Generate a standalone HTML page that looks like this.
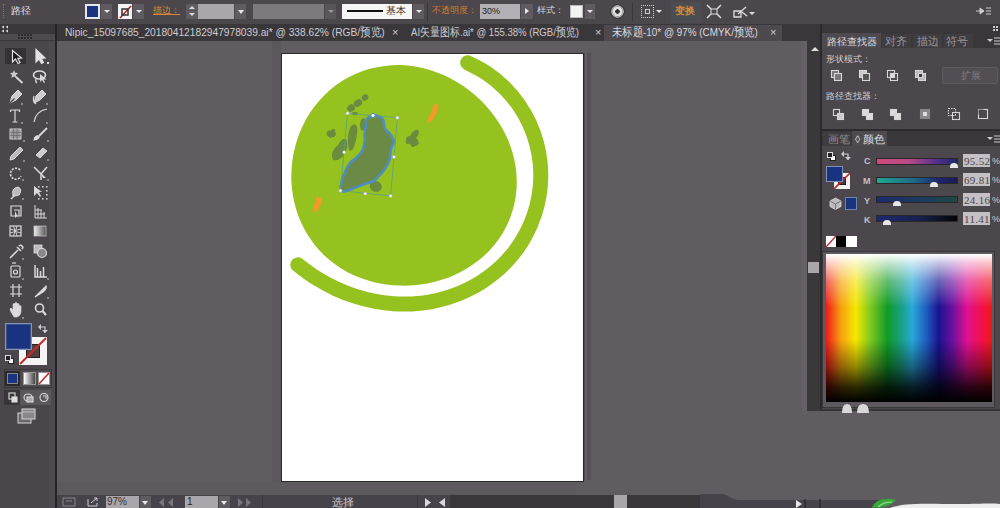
<!DOCTYPE html>
<html><head><meta charset="utf-8">
<style>
*{margin:0;padding:0;box-sizing:border-box}
html,body{width:1000px;height:508px;overflow:hidden;background:#615c62;font-family:"Liberation Sans",sans-serif;}
.a{position:absolute}
#top{left:0;top:0;width:1000px;height:24px;background:#4b474c}
#tabbar{left:57px;top:24px;width:765px;height:17px;background:#3a373b}
#tbhead{left:0;top:24px;width:57px;height:10px;background:#3a373b}
#toolbox{left:0;top:34px;width:55px;height:474px;background:#4a464b}
#tbborder{left:55px;top:24px;width:2px;height:484px;background:#262327}
#canvas{left:57px;top:41px;width:750px;height:453px;background:#615c62}
#status{left:57px;top:495px;width:665px;height:13px;background:#47434a}
.txt{color:#d8d4d9;font-size:11px;white-space:nowrap;line-height:1}
.otxt{color:#d9893a;font-size:11px;white-space:nowrap;line-height:1}
</style></head><body>
<div id="top" class="a"></div>
<div id="tbhead" class="a"></div>
<div id="toolbox" class="a"></div>
<div id="tbborder" class="a"></div>
<div class="a" style="left:49px;top:41px;width:6px;height:467px;background:#4e4a4f"></div>
<!-- TOOLBOX -->
<div class="a" style="left:0;top:34px;width:55px;height:7px;background:#4e4a4f;border-bottom:1px solid #3c393d"></div>
<div class="a" style="left:18px;top:34px;width:15px;height:2px;background:repeating-linear-gradient(90deg,#2e2b2f 0 2px,transparent 2px 3px)"></div>
<div class="a" style="left:18px;top:37px;width:15px;height:2px;background:repeating-linear-gradient(90deg,#2e2b2f 0 2px,transparent 2px 3px)"></div>
<div class="a" style="left:5px;top:48px;width:21px;height:16px;background:#353236"></div>
<svg class="a" style="left:0;top:40px" width="55" height="400" fill="none" stroke="#dcd8dd" stroke-width="1.2">
<g transform="translate(0,-40)">
 <!-- selection -->
 <path d="M12.5,50.5 L12.5,62 L15.5,59 L18,63.5 L20,62.5 L17.8,58.3 L21.5,58 Z" fill="#1a181b" stroke="#e4e0e5"/>
 <!-- direct selection -->
 <path d="M36,49.5 L36,62 L39,59 L41.5,63.5 L43.5,62.5 L41.2,58.3 L45,58 Z" fill="#e4e0e5" stroke="#e4e0e5"/>
 <path d="M47,62 l2,0 l0,2 l-2,0z" fill="#ddd" stroke="none"/>
 <!-- magic wand -->
 <path d="M14,70 l1.2,2.8 3,0.3 -2.3,2 0.8,3 -2.7,-1.6 -2.7,1.6 0.8,-3 -2.3,-2 3,-0.3z" fill="#cfcbd0" stroke="none"/>
 <path d="M16,77 L22.5,83" stroke-width="1.8"/>
 <!-- lasso -->
 <ellipse cx="39.5" cy="75" rx="6" ry="4" stroke-width="1.6"/>
 <path d="M40,74 l0,8 l2,-2 l2,3 l1,-0.5 l-1.5,-3 l3,0z" fill="#dcd8dd" stroke="none"/>
 <path d="M36,79 q-1,3 1,4" />
 <!-- pen -->
 <path d="M10,103 L12,96 L18,90 L22,94 L16,100 Z" fill="#cfcbd0" stroke="#dcd8dd" stroke-width="1"/>
 <path d="M10,103 L14.5,98.5" stroke="#4a464b"/>
 <circle cx="22" cy="104" r="0.8" fill="#ddd" stroke="none"/>
 <!-- curvature pen -->
 <path d="M34,103 L36,96 L42,90 L46,94 L40,100 Z" fill="#cfcbd0" stroke="#dcd8dd" stroke-width="1"/>
 <path d="M34,96 q-2,5 2,8" />
 <circle cx="47" cy="104" r="0.8" fill="#ddd" stroke="none"/>
 <!-- type -->
 <path d="M10.5,110 h9 v2 M15,110 v12 M12.5,122 h5 M10.5,110 v2"/>
 <circle cx="22" cy="123" r="0.8" fill="#ddd" stroke="none"/>
 <!-- arc -->
 <path d="M34,122 Q36,111 47,109"/>
 <circle cx="47" cy="123" r="0.8" fill="#ddd" stroke="none"/>
 <!-- rect/grid -->
 <rect x="10" y="129" width="11" height="10" fill="#9a969b" stroke="#cfcbd0" stroke-width="1"/>
 <path d="M10,132.5 h11 M10,135.5 h11 M13.5,129 v10 M17,129 v10" stroke="#6a666b" stroke-width="0.7"/>
 <circle cx="24" cy="141" r="0.8" fill="#ddd" stroke="none"/>
 <!-- paintbrush -->
 <path d="M47,128 L39,136" stroke-width="1.8"/>
 <path d="M34,140 q1,-5 5,-4 q1,3 -5,4z" fill="#dcd8dd"/>
 <circle cx="48" cy="141" r="0.8" fill="#ddd" stroke="none"/>
 <!-- pencil -->
 <path d="M10,160 L11,156 L20,147 L23,150 L14,159 Z" fill="#bdb9be" stroke="#dcd8dd" stroke-width="1"/>
 <circle cx="24" cy="161" r="0.8" fill="#ddd" stroke="none"/>
 <!-- eraser -->
 <path d="M36,155 L43,148 L47,151 L40,158 Z" fill="#cfcbd0" stroke="#dcd8dd" stroke-width="1"/>
 <circle cx="48" cy="160" r="0.8" fill="#ddd" stroke="none"/>
 <!-- rotate -->
 <path d="M20,170 A5.5,5.5 0 1 0 21,176" stroke-dasharray="2 1.3" stroke-width="1.6"/>
 <circle cx="23" cy="180" r="0.8" fill="#ddd" stroke="none"/>
 <!-- reflect/scissors -->
 <path d="M34,167 L41,174 M47,167 L41,174 L41,180" stroke-width="1.5"/>
 <path d="M40,172 l6,6 l-3,0 z" fill="#dcd8dd" stroke="none"/>
 <circle cx="48" cy="180" r="0.8" fill="#ddd" stroke="none"/>
 <!-- warp -->
 <path d="M13,196 q-2,-8 5,-9 q5,2 1,8 q-3,1 -6,1z" fill="#bdb9be" stroke="#dcd8dd" stroke-width="1"/>
 <path d="M11,199 l4,-4" stroke-width="1.5"/>
 <circle cx="23" cy="199" r="0.8" fill="#ddd" stroke="none"/>
 <!-- free transform dots -->
 <path d="M34,186 L34,196 L37,193 L40,197 L41,196 L39,192 L42,192 Z" fill="#dcd8dd" stroke="none"/>
 <g fill="#cfcbd0" stroke="none"><rect x="38" y="186" width="1.6" height="1.6"/><rect x="42" y="186" width="1.6" height="1.6"/><rect x="46" y="186" width="1.6" height="1.6"/><rect x="46" y="190" width="1.6" height="1.6"/><rect x="46" y="194" width="1.6" height="1.6"/><rect x="38" y="198" width="1.6" height="1.6"/><rect x="42" y="198" width="1.6" height="1.6"/><rect x="46" y="198" width="1.6" height="1.6"/></g>
 <!-- shape builder -->
 <path d="M11,206 h10 v10 h-10z M14,210 h5 v6"/>
 <path d="M15,211 l0,7 l2,-2 l2,3z" fill="#ddd" stroke="none"/>
 <!-- perspective -->
 <path d="M35,205 v13 h12 M38,208 v10 M41,210 v8 M44,212 v6 M35,210 h7 M35,214 h10" stroke-width="1"/>
 <!-- mesh -->
 <rect x="10" y="226" width="11" height="10" stroke-width="1.2"/>
 <path d="M10,229 q5,3 11,0 M10,233 q5,-3 11,0 M13.5,226 q3,5 0,10 M17,226 q-3,5 0,10" stroke-width="0.9"/>
 <!-- gradient -->
 <defs><linearGradient id="gg"><stop offset="0" stop-color="#f0f0f0"/><stop offset="1" stop-color="#555"/></linearGradient></defs>
 <rect x="34" y="226" width="12" height="10" fill="url(#gg)" stroke="#bbb" stroke-width="0.8"/>
 <!-- eyedropper -->
 <path d="M10,258 L18,250 M17,247 l4,4 M19,246 a2,2 0 0 1 3,3" stroke-width="1.6"/>
 <circle cx="23" cy="259" r="0.8" fill="#ddd" stroke="none"/>
 <!-- blend -->
 <rect x="34" y="245" width="8" height="8" fill="#bdb9be" stroke="#ddd" stroke-width="0.8"/>
 <circle cx="42" cy="253" r="4.5" fill="#8a868b" stroke="#ddd" stroke-width="1.2"/>
 <!-- symbol sprayer -->
 <rect x="11" y="266" width="9" height="11" rx="1"/>
 <circle cx="15.5" cy="272" r="2"/>
 <path d="M12,263 h4" />
 <circle cx="23" cy="279" r="0.8" fill="#ddd" stroke="none"/>
 <!-- column graph -->
 <path d="M35,265 v12 h12 M37.5,268 v9 M40.5,271 v6 M43.5,267 v10" stroke-width="1.5"/>
 <circle cx="48" cy="279" r="0.8" fill="#ddd" stroke="none"/>
 <!-- artboard -->
 <path d="M13,284 v13 M19,284 v13 M10,287 h12 M10,294 h12" stroke-width="1.2"/>
 <!-- slice -->
 <path d="M35,297 L46,286 q1,3 -3,6 z" fill="#dcd8dd"/>
 <circle cx="48" cy="298" r="0.8" fill="#ddd" stroke="none"/>
 <!-- hand -->
 <path d="M11,312 q-2,-4 0,-4 l2,2 v-6 q1,-1 2,0 v5 v-6 q1,-1 2,0 v6 v-5 q1,-1 2,0 v5 v-3 q1,-1 2,0 v5 q0,5 -4,6 h-3 z" fill="#dcd8dd" stroke="#dcd8dd" stroke-width="0.6"/>
 <circle cx="23" cy="318" r="0.8" fill="#ddd" stroke="none"/>
 <!-- zoom -->
 <circle cx="39.5" cy="308" r="4" stroke-width="1.6"/>
 <path d="M42.5,311 L46,315" stroke-width="2.2"/>
 <!-- color swatches -->
</g></svg>
<div class="a" style="left:19px;top:337px;width:28px;height:28px;background:#f4f4f4"></div>
<div class="a" style="left:26px;top:344px;width:14px;height:14px;background:#55403f;border:1px solid #222"></div>
<svg class="a" style="left:19px;top:337px" width="28" height="28"><line x1="1" y1="27" x2="27" y2="1" stroke="#c42a2a" stroke-width="2"/></svg>
<div class="a" style="left:5px;top:323px;width:27px;height:27px;background:#8394b8;padding:1px"><div style="width:25px;height:25px;background:#1a3380;border:1px solid #3a4f8a"></div></div>
<svg class="a" style="left:38px;top:324px" width="10" height="10"><path d="M1,3 h6 v6" fill="none" stroke="#ccc" stroke-width="1.2"/><path d="M0,3 l3,-3 v6z M4,6 h6 l-3,3z" fill="#ccc"/></svg>
<div class="a" style="left:8px;top:358px;width:6px;height:6px;background:#fff;border:1px solid #222"></div>
<div class="a" style="left:5px;top:355px;width:6px;height:6px;background:#222;border:1px solid #ddd"></div>
<div class="a" style="left:4px;top:369px;width:48px;height:19px;background:#4f4b50;border:1px solid #3a373b"></div>
<div class="a" style="left:4px;top:390px;width:47px;height:15px;background:#5a565b"></div>
<div class="a" style="left:5px;top:371px;width:15px;height:15px;background:#2a272b;padding:2px"><div style="width:11px;height:11px;background:#1a3380;border:1px solid #888"></div></div>
<div class="a" style="left:23px;top:372px;width:13px;height:13px;background:linear-gradient(90deg,#fff,#444);border:1px solid #999"></div>
<div class="a" style="left:38px;top:372px;width:12px;height:13px;background:#fff;border:1px solid #999"></div>
<svg class="a" style="left:38px;top:372px" width="12" height="13"><line x1="1" y1="12" x2="11" y2="1" stroke="#c42a2a" stroke-width="1.6"/></svg>
<div class="a" style="left:4px;top:390px;width:16px;height:15px;background:#39363a"></div>
<svg class="a" style="left:5px;top:390px" width="46" height="15" fill="none" stroke="#ddd" stroke-width="1.1">
 <rect x="4" y="3" width="6" height="6"/><rect x="7" y="7" width="5" height="5" fill="#ddd"/>
 <ellipse cx="23" cy="7.5" rx="4" ry="3.5"/><rect x="22" y="7" width="6" height="5" fill="#aaa"/>
 <circle cx="39" cy="7.5" r="4"/><path d="M38,6 h3 v3"/>
</svg>
<svg class="a" style="left:17px;top:408px" width="20" height="18" fill="none" stroke="#ccc" stroke-width="1.1">
 <rect x="1" y="5" width="13" height="10" fill="#6a666b"/><rect x="5" y="1" width="13" height="10" fill="#8a868b"/><path d="M5,4 h13" stroke="#bbb"/>
</svg>

<div id="tabbar" class="a"></div>
<!-- TOP CONTROL BAR -->
<div class="a" style="left:3px;top:4px;width:2px;height:14px;border-left:1px dotted #7a767b"></div>
<div class="a txt" style="left:11px;top:6px;font-size:10px;color:#e0dce1">路径</div>
<div class="a" style="left:85px;top:4px;width:15px;height:15px;background:#e6e6f0;padding:2px"><div style="width:11px;height:11px;background:#1b3480"></div></div>
<div class="a" style="left:101px;top:4px;width:11px;height:15px;background:#5f5b60"></div>
<div class="a" style="left:104px;top:10px;width:0;height:0;border-left:3px solid transparent;border-right:3px solid transparent;border-top:3px solid #e8e8e8"></div>
<div class="a" style="left:118px;top:4px;width:14px;height:15px;background:#f4f4f4"></div>
<svg class="a" style="left:118px;top:4px" width="14" height="15"><line x1="2" y1="14" x2="13" y2="2" stroke="#b02020" stroke-width="1.5"/><rect x="4" y="5" width="6" height="6" fill="none" stroke="#333" stroke-width="1.5"/></svg>
<div class="a" style="left:133px;top:4px;width:11px;height:15px;background:#5f5b60"></div>
<div class="a" style="left:136px;top:10px;width:0;height:0;border-left:3px solid transparent;border-right:3px solid transparent;border-top:3px solid #e8e8e8"></div>
<div class="a otxt" style="left:153px;top:6px;font-size:9px;text-decoration:underline">描边：</div>
<div class="a" style="left:186px;top:4px;width:12px;height:15px;background:#5f5b60"></div>
<div class="a" style="left:189px;top:6px;width:0;height:0;border-left:3px solid transparent;border-right:3px solid transparent;border-bottom:3px solid #ddd"></div>
<div class="a" style="left:189px;top:13px;width:0;height:0;border-left:3px solid transparent;border-right:3px solid transparent;border-top:3px solid #ddd"></div>
<div class="a" style="left:198px;top:4px;width:36px;height:15px;background:#aaa6ab"></div>
<div class="a" style="left:235px;top:4px;width:11px;height:15px;background:#5f5b60"></div>
<div class="a" style="left:238px;top:10px;width:0;height:0;border-left:3px solid transparent;border-right:3px solid transparent;border-top:4px solid #e8e8e8"></div>
<div class="a" style="left:253px;top:4px;width:71px;height:15px;background:#7d797e"></div>
<div class="a" style="left:325px;top:4px;width:11px;height:15px;background:#59555a"></div>
<div class="a" style="left:328px;top:10px;width:0;height:0;border-left:3px solid transparent;border-right:3px solid transparent;border-top:3px solid #999"></div>
<div class="a" style="left:342px;top:4px;width:70px;height:15px;background:#f6f6f6"></div>
<div class="a" style="left:347px;top:10px;width:36px;height:2px;background:#111"></div>
<div class="a txt" style="left:386px;top:6px;color:#333;font-size:10px">基本</div>
<div class="a" style="left:413px;top:4px;width:11px;height:15px;background:#5f5b60"></div>
<div class="a" style="left:416px;top:10px;width:0;height:0;border-left:3px solid transparent;border-right:3px solid transparent;border-top:3px solid #e8e8e8"></div>
<div class="a" style="left:427px;top:3px;width:1px;height:18px;background:#3a373b"></div>
<div class="a otxt" style="left:432px;top:6px;font-size:9px;color:#d27a30">不透明度：</div>
<div class="a" style="left:480px;top:4px;width:40px;height:15px;background:#b3afb4"></div>
<div class="a txt" style="left:482px;top:7px;color:#222;font-size:9px">30%</div>
<div class="a" style="left:521px;top:4px;width:12px;height:15px;background:#5f5b60"></div>
<div class="a" style="left:525px;top:8px;width:0;height:0;border-top:3px solid transparent;border-bottom:3px solid transparent;border-left:4px solid #e8e8e8"></div>
<div class="a txt" style="left:537px;top:6px;font-size:9px">样式：</div>
<div class="a" style="left:570px;top:5px;width:13px;height:13px;background:#f2f2f2;border:1px solid #bbb"></div>
<div class="a" style="left:585px;top:4px;width:10px;height:15px;background:#5f5b60"></div>
<div class="a" style="left:587px;top:10px;width:0;height:0;border-left:3px solid transparent;border-right:3px solid transparent;border-top:3px solid #e8e8e8"></div>
<div class="a" style="left:610px;top:4px;width:15px;height:15px;border-radius:50%;background:radial-gradient(circle at 50% 50%,#333 0 2px,#e0e0e0 2.5px 4.5px,#a8a8a8 5px 6px,#3a3a3a 6.5px)"></div>
<div class="a" style="left:632px;top:3px;width:1px;height:18px;background:#3a373b"></div>
<div class="a" style="left:641px;top:5px;width:13px;height:13px;border:1px dotted #ccc"></div>
<div class="a" style="left:645px;top:9px;width:5px;height:5px;border:1px solid #ccc"></div>
<div class="a" style="left:656px;top:10px;width:0;height:0;border-left:3px solid transparent;border-right:3px solid transparent;border-top:3px solid #e8e8e8"></div>
<div class="a" style="left:671px;top:2px;width:30px;height:21px;background:#4b4d53"></div>
<div class="a otxt" style="left:675px;top:6px;font-size:10px;font-weight:bold">变换</div>
<svg class="a" style="left:706px;top:4px" width="16" height="15"><path d="M1,1 L5,5 M15,1 L11,5 M1,14 L5,10 M15,14 L11,10" stroke="#ddd" stroke-width="1.5"/><rect x="5" y="5" width="6" height="5" fill="none" stroke="#ddd"/></svg>
<svg class="a" style="left:732px;top:4px" width="24" height="15"><path d="M2,7 h7 v6 h-7 z M6,10 L14,3 M10,8 L15,12" stroke="#ddd" stroke-width="1.3" fill="none"/><path d="M17,8 l3,3 l3,-3 z" fill="#ddd"/></svg>
<svg class="a" style="left:976px;top:7px" width="16" height="9"><path d="M0,4 h8 M4,1 l4,3 l-4,3 z" stroke="#ccc" fill="#ccc"/><path d="M10,1 h5 M10,4 h5 M10,7 h5" stroke="#ccc"/></svg>

<div id="canvas" class="a"></div>
<div class="a" style="left:272px;top:41px;width:9px;height:441px;background:#5c575d"></div>
<div class="a" style="left:583px;top:53px;width:9px;height:427px;background:linear-gradient(90deg,#4a464b 0,#4f4b50 2px,#646064 2px,#646064 4px,#545055 4px,#575358 8px,#5d595e 8px)"></div>
<!-- TABS -->
<div class="a" style="left:604px;top:25px;width:178px;height:16px;background:#4d494e"></div>
<div class="a txt" style="left:65px;top:27px;font-size:11.5px;color:#cfcbd0;transform:scaleX(0.887);transform-origin:0 0">Nipic_15097685_20180412182947978039.ai* @ 338.62% (RGB/预览)</div>
<div class="a txt" style="left:392px;top:27px;font-size:11px;color:#cfcbd0">×</div>
<div class="a txt" style="left:411px;top:27px;font-size:11.5px;color:#cfcbd0;transform:scaleX(0.832);transform-origin:0 0">AI矢量图标.ai* @ 155.38% (RGB/预览)</div>
<div class="a txt" style="left:595px;top:27px;font-size:11px;color:#cfcbd0">×</div>
<div class="a txt" style="left:612px;top:27px;font-size:11.5px;color:#dcd8dd;transform:scaleX(0.861);transform-origin:0 0">未标题-10* @ 97% (CMYK/预览)</div>
<div class="a txt" style="left:770px;top:27px;font-size:11px;color:#cfcbd0">×</div>
<svg class="a" style="left:1px;top:25px" width="8" height="8" fill="#d8d8d8"><path d="M3,0.5 l-2.5,1.5 l2.5,1.5z M7,0.5 l-2.5,1.5 l2.5,1.5z M3,4.5 l-2.5,1.5 l2.5,1.5z M7,4.5 l-2.5,1.5 l2.5,1.5z"/></svg>

<div id="status" class="a"></div>
<!-- STATUS BAR -->
<div class="a" style="left:57px;top:482px;width:519px;height:13px;background:#5d595e"></div>
<div class="a" style="left:450px;top:495px;width:272px;height:13px;background:#3b383c"></div>
<div class="a" style="left:614px;top:495px;width:13px;height:13px;background:#a9a5aa"></div>
<svg class="a" style="left:700px;top:480px" width="300" height="28"><path d="M0,14 L22,14 C28,14 30,20 40,20 L180,20 L180,28 L0,28 Z" fill="#47434a"/><path d="M172,28 C174,20 186,17 196,20 C192,25 182,28 172,28Z" fill="#38a838"/><path d="M178,27 C182,23 188,22 192,22" stroke="#9ee09e" stroke-width="1.2" fill="none"/><path d="M190,28 C205,22 230,24 260,24 C280,24 290,23 300,24 L300,28 Z" fill="#eeeeee"/></svg>
<svg class="a" style="left:60px;top:496px" width="200" height="12" fill="none" stroke="#8a868b" stroke-width="1">
 <path d="M3,2 h12 v8 h-12z M6,5 h6" />
 <path d="M28,3 v7 h9 v-3 M31,7 l6,-5 M34,2 h3 v3" stroke="#cfcbd0"/>
</svg>
<div class="a" style="left:106px;top:496px;width:33px;height:12px;background:#aaa6ab"></div>
<div class="a txt" style="left:107px;top:497px;font-size:10px;color:#333">97%</div>
<div class="a" style="left:140px;top:496px;width:11px;height:12px;background:#5f5b60"></div>
<div class="a" style="left:142px;top:501px;width:0;height:0;border-left:3px solid transparent;border-right:3px solid transparent;border-top:4px solid #e8e8e8"></div>
<svg class="a" style="left:155px;top:497px" width="25" height="11" fill="#7a767b"><path d="M2,1 v9 M9,1 l-5,4.5 l5,4.5z M18,1 l-5,4.5 l5,4.5z"/></svg>
<div class="a" style="left:185px;top:496px;width:33px;height:12px;background:#aaa6ab"></div>
<div class="a txt" style="left:187px;top:497px;font-size:10px;color:#222">1</div>
<div class="a" style="left:219px;top:496px;width:11px;height:12px;background:#5f5b60"></div>
<div class="a" style="left:221px;top:501px;width:0;height:0;border-left:3px solid transparent;border-right:3px solid transparent;border-top:4px solid #e8e8e8"></div>
<svg class="a" style="left:234px;top:497px" width="25" height="11" fill="#7a767b"><path d="M4,1 l5,4.5 l-5,4.5z M12,1 l5,4.5 l-5,4.5z M19,1 v9"/></svg>
<div class="a" style="left:262px;top:495px;width:1px;height:13px;background:#3a373b"></div>
<div class="a txt" style="left:332px;top:497px;font-size:10.5px;color:#d0ccd1">选择</div>
<div class="a" style="left:417px;top:495px;width:1px;height:13px;background:#3a373b"></div>
<svg class="a" style="left:423px;top:497px" width="26" height="11" fill="#dcd8dd"><path d="M2,1 l6,4.5 l-6,4.5z M22,1 l-6,4.5 l6,4.5z"/></svg>
<svg class="a" style="left:795px;top:499px" width="30" height="9" fill="#e8e8e8"><path d="M1,1 l6,4 l-6,4z"/><path d="M10,0 v9 M25,0 v9" stroke="#2e2b2f" stroke-width="1.5"/></svg>

<!-- artboard -->
<div class="a" style="left:281px;top:53px;width:303px;height:429px;background:#fff;border:1px solid #2c292d"></div>
<svg class="a" style="left:0;top:0" width="1000" height="508">
  <path id="blob" d="M516.8,181.5 C516.8,186.6 516.5,191.7 515.7,196.7 C515.0,201.8 513.8,206.8 512.3,211.6 C510.8,216.4 508.9,221.2 506.7,225.7 C504.5,230.2 501.9,234.6 499.1,238.7 C496.2,242.8 493.0,246.7 489.7,250.3 C486.3,253.9 482.6,257.2 478.8,260.3 C475.0,263.3 470.9,266.1 466.8,268.6 C462.7,271.1 458.4,273.3 454.1,275.2 C449.8,277.1 445.3,278.7 440.8,280.1 C436.4,281.5 431.9,282.6 427.3,283.5 C422.8,284.3 418.2,284.9 413.7,285.3 C409.1,285.7 404.5,285.8 400.0,285.6 C395.5,285.5 390.9,285.2 386.4,284.5 C381.9,283.9 377.5,283.1 373.1,282.0 C368.7,280.8 364.3,279.5 360.1,277.8 C355.9,276.2 351.7,274.3 347.6,272.2 C343.6,270.0 339.7,267.6 336.0,265.0 C332.2,262.3 328.6,259.4 325.2,256.3 C321.9,253.1 318.7,249.7 315.7,246.2 C312.8,242.6 310.1,238.8 307.6,234.8 C305.2,230.9 303.0,226.7 301.1,222.5 C299.2,218.2 297.5,213.8 296.1,209.3 C294.8,204.8 293.7,200.2 292.9,195.6 C292.1,191.0 291.6,186.2 291.4,181.5 C291.2,176.8 291.3,172.0 291.7,167.2 C292.0,162.5 292.7,157.7 293.7,153.0 C294.6,148.3 295.9,143.6 297.4,139.0 C298.9,134.4 300.8,129.8 302.9,125.4 C305.0,121.0 307.5,116.7 310.2,112.6 C312.9,108.5 315.9,104.5 319.2,100.7 C322.5,97.0 326.1,93.4 329.9,90.1 C333.7,86.9 337.8,83.8 342.0,81.1 C346.3,78.4 350.8,76.0 355.5,74.0 C360.1,71.9 364.9,70.2 369.8,68.8 C374.7,67.5 379.7,66.5 384.8,65.9 C389.8,65.3 394.9,65.0 400.0,65.1 C405.1,65.2 410.2,65.7 415.1,66.5 C420.1,67.3 425.1,68.5 429.9,70.0 C434.7,71.4 439.4,73.2 444.0,75.3 C448.6,77.3 453.0,79.6 457.3,82.2 C461.6,84.8 465.7,87.6 469.7,90.7 C473.6,93.7 477.4,97.1 481.0,100.5 C484.5,104.0 487.9,107.8 491.0,111.7 C494.1,115.6 497.1,119.7 499.7,123.9 C502.3,128.2 504.8,132.7 506.8,137.2 C508.9,141.8 510.7,146.6 512.2,151.4 C513.7,156.3 514.8,161.3 515.6,166.3 C516.3,171.3 516.8,176.4 516.8,181.5Z" fill="#96c21f"/>
  <g fill="#6b8c3f">
   <ellipse cx="365" cy="97.5" rx="3.5" ry="3" transform="rotate(-35 365 97.5)"/>
   <ellipse cx="358" cy="103" rx="4.5" ry="3.5" transform="rotate(-35 358 103)"/>
   <ellipse cx="351" cy="108" rx="4" ry="3.5" transform="rotate(-35 351 108)"/>
   <ellipse cx="355" cy="113.5" rx="3" ry="1.8"/>
   <path d="M327,132 q2,-3 4,-1 q1,-3 3,-2 q2,1 1,3 q2,2 0,4 q-1,2 -3,1 q-1,2 -3,0 q-3,-1 -2,-5z"/>
   <path d="M349,150 q-2,-6 -1,-13 q1,-8 3,-11 q3,-3 5,-1 q2,3 1,9 q-1,8 -3,13 q-2,5 -5,3z"/>
   <path d="M333,160 q-2,-5 0,-9 q2,-4 5,-6 q2,-4 5,-6 q4,-1 4,3 q1,5 -1,9 q-2,5 -5,7 q-3,3 -8,2z"/>
   <path d="M361,130 q-2,-5 0,-10 q2,-3 4,-1 q2,4 0,9 q-2,4 -4,2z"/>
   <path d="M370,188 q-1,-5 2,-7 q4,-1 7,1 q3,2 3,5 q-1,4 -5,5 q-5,0 -7,-4z"/>
   <path d="M406,140 q0,-4 4,-4 q2,-4 5,-6 q4,-1 4,3 q-1,3 -3,5 q3,2 3,5 q-1,3 -4,3 q-2,2 -4,0 q-1,-3 -3,-2 q-3,0 -2,-4z"/>
  </g>
  <path d="M372.5,115.5 C374.4,115.0 376.3,115.4 378.0,116.0 C379.7,116.6 381.7,117.7 382.7,119.0 C383.7,120.3 383.6,122.3 384.0,124.0 C384.4,125.7 383.9,127.2 385.0,129.0 C386.1,130.8 389.1,132.7 390.6,134.8 C392.1,136.9 393.8,139.7 394.0,141.6 C394.2,143.5 392.6,144.5 392.0,146.0 C391.4,147.5 391.0,148.3 390.6,150.6 C390.2,152.9 390.4,156.7 389.5,159.7 C388.6,162.7 386.7,166.1 385.0,168.7 C383.3,171.3 381.2,173.4 379.3,175.5 C377.4,177.6 376.2,179.5 373.6,181.0 C371.0,182.5 366.7,183.3 363.5,184.5 C360.3,185.7 357.4,186.9 354.4,188.0 C351.4,189.1 347.7,190.9 345.4,191.3 C343.1,191.7 341.4,192.1 340.8,190.2 C340.2,188.3 341.2,183.2 342.0,180.0 C342.8,176.8 344.1,173.8 345.4,171.0 C346.7,168.2 348.1,165.3 350.0,163.0 C351.9,160.7 354.6,159.5 356.7,157.4 C358.8,155.3 361.0,153.2 362.3,150.6 C363.6,148.0 364.2,144.4 364.6,141.6 C365.0,138.8 364.4,136.2 364.6,133.6 C364.8,130.9 365.3,128.1 365.7,125.7 C366.1,123.3 365.8,120.7 366.9,119.0 C368.0,117.3 370.6,116.0 372.5,115.5Z" fill="#6a8a45" stroke="#4f8cc0" stroke-width="2.6" stroke-linejoin="round"/>
  <path d="M347.6,113.3 L397.4,117.8 L390.6,195.9 L340.4,190.7 Z" fill="none" stroke="#5e9c8c" stroke-width="0.8"/>
  <g fill="#f4f4f4" stroke="#8aa0a8" stroke-width="0.5">
   <circle cx="347.6" cy="113.3" r="1.7"/><circle cx="397.4" cy="117.8" r="1.7"/><circle cx="390.6" cy="195.9" r="1.7"/><circle cx="340.4" cy="190.7" r="1.7"/>
   <circle cx="344.2" cy="152.2" r="1.7"/><circle cx="394" cy="157" r="1.7"/><circle cx="365.3" cy="193.6" r="1.7"/>
  </g>
  <circle cx="373" cy="115.5" r="2.2" fill="#e8eef8" stroke="#4f8ab8" stroke-width="1"/>
  <path d="M428,122 L431,114 L433,113 L434,106 L437,105 L436,112 L434,115 L433,118 Z" fill="#f39a28" stroke="#f39a28" stroke-width="2.2" stroke-linejoin="round"/>
  <path d="M314.5,211 L315.5,204 L317,202 L317.5,197.5 L320.5,199 L320,204 L318,207 L317,210 Z" fill="#f39a28" stroke="#f39a28" stroke-width="2.2" stroke-linejoin="round"/>
  <path id="arc" d="M297.8,264.8 C300.9,267.1 310.2,274.3 316.5,278.2 C322.8,282.2 329.2,285.6 335.6,288.6 C342.0,291.6 348.5,294.1 354.9,296.1 C361.3,298.2 367.8,299.9 374.2,301.1 C380.5,302.4 386.9,303.2 393.2,303.7 C399.6,304.1 405.8,304.2 412.0,303.9 C418.2,303.5 424.4,302.9 430.5,301.8 C436.5,300.7 442.5,299.3 448.4,297.4 C454.2,295.6 460.0,293.4 465.5,290.8 C471.1,288.2 476.6,285.2 481.8,281.9 C487.0,278.5 492.0,274.8 496.7,270.7 C501.5,266.6 506.0,262.1 510.2,257.2 C514.3,252.4 518.2,247.2 521.6,241.7 C525.0,236.2 528.1,230.3 530.7,224.3 C533.3,218.2 535.5,211.8 537.1,205.3 C538.7,198.8 539.8,192.0 540.4,185.1 C540.9,178.3 540.9,171.3 540.3,164.4 C539.7,157.4 538.5,150.4 536.6,143.5 C534.8,136.7 532.4,129.8 529.4,123.3 C526.3,116.8 522.7,110.4 518.5,104.5 C514.3,98.5 509.5,92.8 504.3,87.6 C499.1,82.5 493.3,77.7 487.2,73.5 C481.1,69.4 470.9,64.6 467.7,62.8" fill="none" stroke="#96c21f" stroke-width="15" stroke-linecap="round"/>
</svg>
<!-- right panel -->
<div class="a" style="left:802px;top:41px;width:5px;height:374px;background:#655f66"></div>
<div class="a" style="left:807px;top:41px;width:14px;height:370px;background:#3b383c"></div>
<div class="a" style="left:811px;top:47px;width:0;height:0;border-left:4px solid transparent;border-right:4px solid transparent;border-bottom:4px solid #e0e0e0"></div>
<div class="a" style="left:808px;top:262px;width:11px;height:11px;background:#a9a5aa"></div>
<div class="a" style="left:820px;top:24px;width:180px;height:387px;background:#4b474c;border-left:2px solid #2c292d;border-bottom:2px solid #39363a"></div>
<div class="a" style="left:822px;top:24px;width:178px;height:9px;background:#3a373b"></div>
<div class="a" style="left:993px;top:26px;width:2px;height:2px;background:#ccc;box-shadow:3px 0 #ccc,0 3px #ccc,3px 3px #ccc"></div>
<!-- pathfinder tabs -->
<div class="a" style="left:822px;top:33px;width:178px;height:15px;background:#3a373b"></div>
<div class="a" style="left:822px;top:33px;width:59px;height:15px;background:#4e4a4f"></div>
<div class="a" style="left:882px;top:34px;width:29px;height:14px;background:#403d41"></div>
<div class="a" style="left:913px;top:34px;width:29px;height:14px;background:#403d41"></div>
<div class="a" style="left:944px;top:34px;width:29px;height:14px;background:#403d41"></div>
<div class="a txt" style="left:827px;top:37px;font-size:9.8px;color:#dedade">路径查找器</div>
<div class="a txt" style="left:885px;top:36px;font-size:10.5px;color:#9a969b">对齐</div>
<div class="a txt" style="left:917px;top:36px;font-size:10.5px;color:#9a969b">描边</div>
<div class="a txt" style="left:946px;top:36px;font-size:10.5px;color:#9a969b">符号</div>
<svg class="a" style="left:986px;top:37px" width="14" height="9"><path d="M1,2 l3,3 l3,-3z" fill="#ccc"/><path d="M8,1 h6 M8,4 h6 M8,7 h6" stroke="#ccc"/></svg>
<div class="a txt" style="left:826px;top:55px;font-size:9px;color:#d0ccd1">形状模式：</div>
<svg class="a" style="left:826px;top:66px" width="110" height="20" fill="none" stroke="#d8d4d9" stroke-width="1.1">
 <g transform="translate(5,4)"><rect x="0.5" y="0.5" width="7" height="7" fill="#777"/><rect x="3.5" y="3.5" width="7" height="7" fill="#777"/></g>
 <g transform="translate(33,4)"><rect x="0.5" y="0.5" width="7" height="7" fill="#ccc"/><rect x="3.5" y="3.5" width="7" height="7" fill="#555"/></g>
 <g transform="translate(61,4)"><rect x="0.5" y="0.5" width="7" height="7"/><rect x="3.5" y="3.5" width="7" height="7"/><rect x="3.5" y="3.5" width="4" height="4" fill="#ddd"/></g>
 <g transform="translate(89,4)"><rect x="0.5" y="0.5" width="7" height="7" fill="#bbb"/><rect x="3.5" y="3.5" width="7" height="7" fill="#bbb"/><rect x="3.5" y="3.5" width="4" height="4" fill="#333"/></g>
</svg>
<div class="a" style="left:942px;top:67px;width:56px;height:17px;border:1px solid #5e5a5f;background:#524e53;border-radius:2px"></div>
<div class="a txt" style="left:961px;top:71px;font-size:10px;color:#7e7a7f">扩展</div>
<div class="a txt" style="left:826px;top:92px;font-size:9px;color:#d0ccd1">路径查找器：</div>
<svg class="a" style="left:826px;top:104px" width="170" height="20" fill="none" stroke="#d8d4d9" stroke-width="1.1">
 <g transform="translate(7,5)"><rect x="0.5" y="0.5" width="6" height="6"/><rect x="4.5" y="4.5" width="6" height="6" fill="#ccc"/></g>
 <g transform="translate(36,5)"><rect x="0.5" y="0.5" width="6" height="6" fill="#ddd"/><rect x="4.5" y="4.5" width="6" height="6" fill="#ddd"/></g>
 <g transform="translate(64,5)"><rect x="0.5" y="0.5" width="6" height="6" fill="#ddd"/><rect x="4.5" y="4.5" width="6" height="6" fill="#ddd"/></g>
 <g transform="translate(94,5)"><rect x="0.5" y="0.5" width="9" height="9" fill="#888" stroke="#888"/><rect x="3" y="3" width="4" height="4" fill="#ddd" stroke="none"/></g>
 <g transform="translate(122,4)"><rect x="0.5" y="0.5" width="7" height="7" stroke-dasharray="1.5 1"/><rect x="4.5" y="4.5" width="7" height="7"/></g>
 <g transform="translate(152,5)"><rect x="0.5" y="0.5" width="9" height="9"/><rect x="0.5" y="0.5" width="5" height="5" fill="#4b474c" stroke="none"/></g>
</svg>
<!-- color panel -->
<div class="a" style="left:822px;top:129px;width:178px;height:2px;background:#2e2b2f"></div>
<div class="a" style="left:822px;top:131px;width:178px;height:15px;background:#3a373b"></div>
<div class="a" style="left:823px;top:132px;width:28px;height:14px;background:#403d41"></div>
<div class="a" style="left:852px;top:131px;width:35px;height:15px;background:#4e4a4f"></div>
<div class="a txt" style="left:828px;top:134px;font-size:10.5px;color:#8e8a8f">画笔</div>
<div class="a txt" style="left:855px;top:134px;font-size:10.5px;color:#dedade">◊ 颜色</div>
<svg class="a" style="left:986px;top:135px" width="14" height="9"><path d="M1,2 l3,3 l3,-3z" fill="#ccc"/><path d="M8,1 h6 M8,4 h6 M8,7 h6" stroke="#ccc"/></svg>
<div class="a" style="left:830px;top:155px;width:6px;height:6px;background:#fff;border:1px solid #222"></div>
<div class="a" style="left:827px;top:152px;width:6px;height:6px;background:#222;border:1px solid #ddd"></div>
<svg class="a" style="left:841px;top:151px" width="10" height="10"><path d="M1,3 h6 v6" fill="none" stroke="#ccc" stroke-width="1.2"/><path d="M0,3 l3,-3 v6z M4,6 h6 l-3,3z" fill="#ccc"/></svg>
<div class="a" style="left:834px;top:173px;width:16px;height:16px;background:#f4f4f4"></div>
<div class="a" style="left:838px;top:177px;width:8px;height:8px;background:#4a3a3e;border:1px solid #222"></div>
<svg class="a" style="left:834px;top:173px" width="16" height="16"><line x1="0" y1="16" x2="16" y2="0" stroke="#c42a2a" stroke-width="1.6"/></svg>
<div class="a" style="left:826px;top:166px;width:17px;height:16px;background:#7f90b4;padding:1px"><div style="width:15px;height:14px;background:#1a3380"></div></div>
<svg class="a" style="left:829px;top:197px" width="13" height="13" fill="#bbb" stroke="#ddd" stroke-width="0.8"><path d="M6.5,1 L12,4 L12,9.5 L6.5,12.5 L1,9.5 L1,4 Z"/><path d="M1,4 L6.5,7 L12,4 M6.5,7 V12.5" fill="none" stroke="#666"/></svg>
<div class="a" style="left:845px;top:197px;width:12px;height:13px;background:#6f83ae;padding:1px"><div style="width:10px;height:11px;background:#1a3380"></div></div>
<div class="a txt" style="left:864px;top:157px;font-size:9px;color:#c4c0c5;font-weight:bold">C</div>
<div class="a txt" style="left:863px;top:177px;font-size:9px;color:#c4c0c5;font-weight:bold">M</div>
<div class="a txt" style="left:864px;top:197px;font-size:9px;color:#c4c0c5;font-weight:bold">Y</div>
<div class="a txt" style="left:864px;top:216px;font-size:9px;color:#c4c0c5;font-weight:bold">K</div>
<div class="a" style="left:876px;top:158px;width:82px;height:7px;background:linear-gradient(90deg,#d04a7a,#b84a86 40%,#51308a 75%,#1e2a6a);border:1px solid #2a272b"></div>
<div class="a" style="left:876px;top:177px;width:82px;height:7px;background:linear-gradient(90deg,#1ea890,#1f6a88 45%,#1d2a70 75%,#1a1a50);border:1px solid #2a272b"></div>
<div class="a" style="left:876px;top:196px;width:82px;height:7px;background:linear-gradient(90deg,#1c2a6c,#1c3c5c 60%,#1f4a40);border:1px solid #2a272b"></div>
<div class="a" style="left:876px;top:215px;width:82px;height:7px;background:linear-gradient(90deg,#1e2a70,#16204a 55%,#050505);border:1px solid #2a272b"></div>
<svg class="a" style="left:945px;top:158px" width="20" height="70" fill="#e8e8e8"><path d="M9,5 q4,0 4,4 v1 h-8 v-1 q0,-4 4,-4z"/></svg>
<svg class="a" style="left:925px;top:178px" width="20" height="20" fill="#e8e8e8"><path d="M9,4 q4,0 4,4 v1 h-8 v-1 q0,-4 4,-4z"/></svg>
<svg class="a" style="left:888px;top:197px" width="20" height="20" fill="#e8e8e8"><path d="M9,4 q4,0 4,4 v1 h-8 v-1 q0,-4 4,-4z"/></svg>
<svg class="a" style="left:878px;top:216px" width="20" height="20" fill="#e8e8e8"><path d="M9,4 q4,0 4,4 v1 h-8 v-1 q0,-4 4,-4z"/></svg>
<div class="a" style="left:963px;top:154px;width:27px;height:13px;background:#c4c0c5"></div>
<div class="a" style="left:963px;top:173px;width:27px;height:13px;background:#c4c0c5"></div>
<div class="a" style="left:963px;top:193px;width:27px;height:13px;background:#c4c0c5"></div>
<div class="a" style="left:963px;top:212px;width:27px;height:13px;background:#c4c0c5"></div>
<div class="a" style="left:964px;top:156px;width:26px;height:11px;overflow:hidden"><div class="txt" style="font-family:'Liberation Serif',serif;font-size:11px;color:#4a4a4a;letter-spacing:0.3px;">95.52</div></div>
<div class="a" style="left:964px;top:175px;width:26px;height:11px;overflow:hidden"><div class="txt" style="font-family:'Liberation Serif',serif;font-size:11px;color:#4a4a4a;letter-spacing:0.3px;">69.81</div></div>
<div class="a" style="left:964px;top:195px;width:26px;height:11px;overflow:hidden"><div class="txt" style="font-family:'Liberation Serif',serif;font-size:11px;color:#4a4a4a;letter-spacing:0.3px;">24.16</div></div>
<div class="a" style="left:964px;top:214px;width:26px;height:11px;overflow:hidden"><div class="txt" style="font-family:'Liberation Serif',serif;font-size:11px;color:#4a4a4a;letter-spacing:0.3px;">11.41</div></div>
<div class="a txt" style="left:992px;top:157px;font-size:9px;color:#ccc">%</div>
<div class="a txt" style="left:992px;top:176px;font-size:9px;color:#ccc">%</div>
<div class="a txt" style="left:992px;top:196px;font-size:9px;color:#ccc">%</div>
<div class="a txt" style="left:992px;top:215px;font-size:9px;color:#ccc">%</div>
<div class="a" style="left:826px;top:236px;width:10px;height:11px;background:#fff"></div>
<svg class="a" style="left:826px;top:236px" width="10" height="11"><line x1="0" y1="11" x2="10" y2="0" stroke="#c42a2a" stroke-width="1.4"/></svg>
<div class="a" style="left:836px;top:236px;width:10px;height:11px;background:#000"></div>
<div class="a" style="left:846px;top:236px;width:11px;height:11px;background:#fff"></div>
<!-- spectrum -->
<div class="a" style="left:822px;top:251px;width:173px;height:157px;background:#5d595e;border:1px solid #3a373b"></div>
<div class="a" style="left:826px;top:254px;width:166px;height:148px;background:#000;overflow:hidden">
 <div style="position:absolute;inset:0;background:linear-gradient(90deg,#f01818 0%,#f8a010 9%,#f4e800 18%,#7cc820 27%,#109a28 37%,#18a080 45%,#28a8d8 52%,#2060c0 60%,#1a1290 68%,#6a10a0 76%,#e01090 85%,#f01050 93%,#f01818 100%)"></div>
 <div style="position:absolute;inset:0;background:linear-gradient(180deg,#fff 0%,rgba(255,255,255,0.75) 6%,rgba(255,255,255,0.35) 18%,rgba(255,255,255,0) 36%,rgba(0,0,0,0) 58%,rgba(0,0,0,0.4) 76%,rgba(0,0,0,0.82) 90%,#000 100%)"></div>
</div>
<svg class="a" style="left:840px;top:401px" width="32" height="12" fill="#d8d8d8"><path d="M2,12 q0,-9 5,-9 q5,0 5,9z M17,12 q0,-9 6,-9 q6,0 6,9z"/></svg>
</body></html>
